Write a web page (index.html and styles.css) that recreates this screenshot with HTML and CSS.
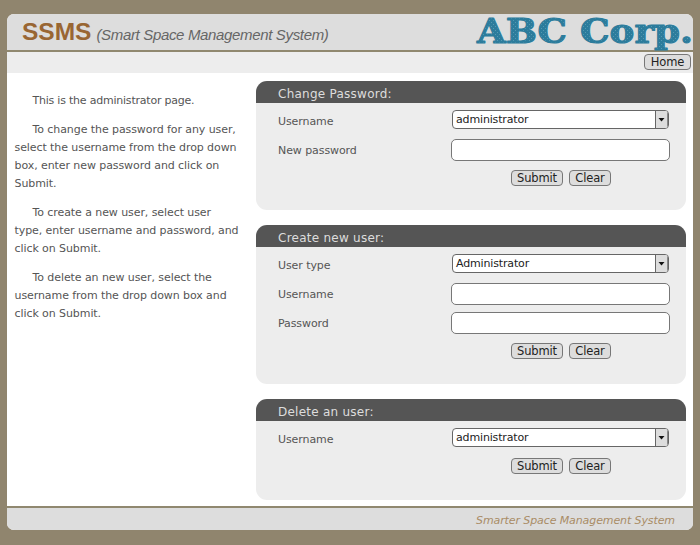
FILE: index.html
```html
<!DOCTYPE html>
<html lang="en">
<head>
<meta charset="utf-8">
<title>SSMS</title>
<link rel="stylesheet" href="styles.css">
</head>
<body>
<div class="page">
  <header class="header">
    <h1 class="title"><span class="brand">SSMS</span><span class="tagline">(Smart Space Management System)</span></h1>
    <svg class="logo" width="218" height="38" viewBox="0 0 218 38">
      <defs>
        <pattern id="weave" width="4" height="4" patternUnits="userSpaceOnUse">
          <rect width="4" height="4" fill="#2c7c9c"/>
          <rect x="0" y="0" width="1" height="1" fill="#5599b2"/>
          <rect x="2" y="2" width="1" height="1" fill="#5599b2"/>
        </pattern>
      </defs>
      <text class="logo-text" x="2" y="28.5" textLength="90" lengthAdjust="spacingAndGlyphs">ABC</text>
      <text class="logo-text" x="105" y="28.5" textLength="113" lengthAdjust="spacingAndGlyphs">Corp.</text>
    </svg>
  </header>
  <nav class="nav"><button class="btn home">Home</button></nav>
  <main class="main">
    <aside class="help">
      <p class="intro">This is the administrator page.</p>
      <p>To change the password for any user,<br>select the username from the drop down<br>box, enter new password and click on<br>Submit.</p>
      <p>To create a new user, select user<br>type, enter username and password, and<br>click on Submit.</p>
      <p>To delete an new user, select the<br>username from the drop down box and<br>click on Submit.</p>
    </aside>
    <div class="cards">
      <section class="card change">
        <h2>Change Password:</h2>
        <div class="row"><label>Username</label><div class="select"><span>administrator</span><i class="drop"><svg width="7" height="4" viewBox="0 0 7 4"><path d="M.5 0h6L3.5 3.5z"/></svg></i></div></div>
        <div class="row second"><label>New password</label><input class="input" type="text"></div>
        <div class="actions"><button class="btn submit">Submit</button><button class="btn clear">Clear</button></div>
      </section>
      <section class="card create">
        <h2>Create new user:</h2>
        <div class="row"><label>User type</label><div class="select"><span>Administrator</span><i class="drop"><svg width="7" height="4" viewBox="0 0 7 4"><path d="M.5 0h6L3.5 3.5z"/></svg></i></div></div>
        <div class="row second"><label>Username</label><input class="input" type="text"></div>
        <div class="row"><label>Password</label><input class="input" type="text"></div>
        <div class="actions"><button class="btn submit">Submit</button><button class="btn clear">Clear</button></div>
      </section>
      <section class="card delete">
        <h2>Delete an user:</h2>
        <div class="row"><label>Username</label><div class="select"><span>administrator</span><i class="drop"><svg width="7" height="4" viewBox="0 0 7 4"><path d="M.5 0h6L3.5 3.5z"/></svg></i></div></div>
        <div class="actions"><button class="btn submit">Submit</button><button class="btn clear">Clear</button></div>
      </section>
    </div>
  </main>
  <footer class="footer">Smarter Space Management System</footer>
</div>
</body>
</html>
```
FILE: styles.css
```css
* { box-sizing: border-box; }
body {
  margin: 0;
  height: 545px;
  padding: 14px 7px 15px;
  background: #90856e;
  font-family: "DejaVu Sans", Verdana, sans-serif;
  font-size: 11px;
  color: #555;
  overflow: hidden;
}
.page {
  height: 516px;
  display: flex;
  flex-direction: column;
  background: #fff;
  border-radius: 7px;
}
.header {
  height: 38px;
  flex: none;
  display: flex;
  justify-content: space-between;
  background: #ddd;
  border-bottom: 2px solid #90886f;
  border-radius: 7px 7px 0 0;
}
.title {
  margin: 0;
  padding-left: 15px;
  display: flex;
  align-items: baseline;
  gap: 5px;
  font-family: "Liberation Sans", Arial, sans-serif;
  line-height: 36px;
  white-space: nowrap;
}
.brand { font-size: 24.5px; color: #996633; }
.tagline { font-size: 15px; font-weight: 400; font-style: italic; color: #666; letter-spacing: -.34px; }
.logo { display: block; overflow: visible; }
.logo-text {
  font: bold 34px "DejaVu Serif", serif;
  fill: url(#weave);
  stroke: #2c7c9c;
  stroke-width: 1.1px;
  stroke-linejoin: round;
}
.nav {
  height: 21px;
  flex: none;
  display: flex;
  justify-content: flex-end;
  padding: 2px 2px 0 0;
  background: #ededed;
}
.btn {
  height: 16px;
  padding: 0;
  border: 1px solid #777;
  border-radius: 4px;
  background: #ddd;
  color: #222;
  font: 11.5px/14px "DejaVu Sans", Verdana, sans-serif;
  letter-spacing: -.15px;
}
.home { width: 47px; }
.submit { width: 52px; }
.clear { width: 42px; }
.main { flex: 1; display: flex; }
.help { width: 249px; padding: 19px 0 0 7.5px; line-height: 18px; white-space: nowrap; letter-spacing: -.08px; }
.help p { margin: 0 0 11px; text-indent: 18px; }
.help .intro { letter-spacing: -.22px; }
.cards { width: 429.5px; padding-top: 8px; display: flex; flex-direction: column; gap: 15px; }
.card { background: #ededed; border-radius: 11px; overflow: hidden; }
.change { height: 129px; }
.create { height: 159px; }
.delete { height: 101px; }
.card h2 {
  margin: 0 0 2px;
  height: 22px;
  padding: 2px 0 0 22px;
  background: #555;
  color: #ddd;
  font-size: 12px;
  font-weight: 400;
  line-height: 22px;
  letter-spacing: .25px;
}
.row {
  height: 29px;
  display: grid;
  grid-template-columns: 173px 219px;
  align-items: center;
  padding-left: 22px;
}
.second { margin-top: 1px; }
.row label { padding-top: 4px; letter-spacing: -.08px; }
.second label, .second + .row label { padding-top: 2px; }
.select {
  width: 217px;
  height: 19px;
  margin-left: 1px;
  display: flex;
  justify-content: space-between;
  border: 1px solid #666;
  border-radius: 4px;
  background: #fff;
  color: #222;
  line-height: 17px;
  letter-spacing: -.15px;
  padding-left: 3px;
  overflow: hidden;
}
.drop {
  width: 13px;
  display: flex;
  align-items: center;
  justify-content: center;
  border-left: 1px solid #666;
  border-right: 1px solid #888;
  background: #ddd;
}
.drop svg { fill: #111; }
.input {
  width: 219px;
  height: 22px;
  border: 1px solid #777;
  border-radius: 5px;
  background: #fff;
}
.actions { height: 28px; display: flex; align-items: center; gap: 6px; padding-left: 255px; }
.create .actions { height: 27px; }
.footer {
  height: 24px;
  flex: none;
  padding-right: 18px;
  background: #ddd;
  border-top: 2px solid #90886f;
  border-radius: 0 0 7px 7px;
  color: #a98c66;
  font-style: italic;
  line-height: 25px;
  letter-spacing: -.1px;
  text-align: right;
}
```
